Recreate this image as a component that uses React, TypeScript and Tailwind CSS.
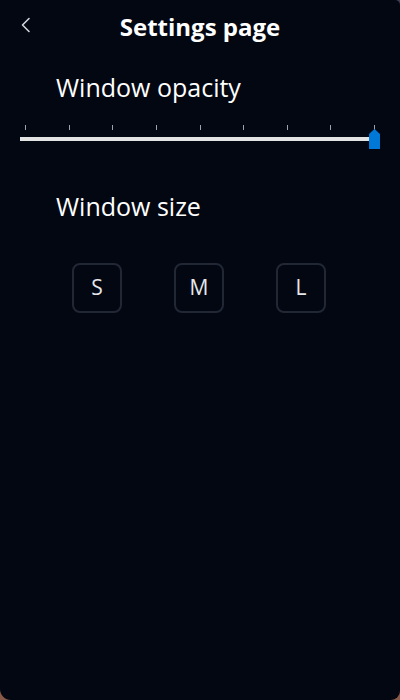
import React from "react";

export default function App() {
  const ticks = Array.from({ length: 9 });
  return (
    <div className="w-[400px] h-[700px] bg-gradient-to-b from-[#3a4152] via-[#2a2730] to-[#8a5a48]">
      <div
        className="w-[400px] h-[700px] bg-[#030712] rounded-tr-[5px] rounded-br-[9px] rounded-bl-[11px] flex flex-col"
        style={{ fontFamily: '"Open Sans", "Noto Sans", sans-serif' }}
      >
        <div className="grid grid-cols-[1fr_auto_1fr] items-start pt-[11px]">
          <div className="pl-[20px] pt-[6px]">
            <svg width="12" height="16" viewBox="0 0 12 16" fill="none">
              <polyline
                points="9,1.5 2.5,8 9,14.5"
                stroke="#d1d5db"
                strokeWidth="1.6"
                strokeLinecap="round"
                strokeLinejoin="round"
              />
            </svg>
          </div>
          <h1 className="text-[24px] leading-[32px] font-bold text-white">Settings page</h1>
          <div />
        </div>

        <div className="mt-[27px] pl-[56px] text-[25px] leading-[34px] text-white">
          Window opacity
        </div>

        <div className="mt-[21px] mx-[20px] w-[360px] flex flex-col">
          <div className="flex justify-between px-[5px]">
            {ticks.map((_, i) => (
              <div key={i} className="w-px h-[5px] bg-[#9ca3af]" />
            ))}
          </div>
          <div className="flex items-center -mt-[1px] h-[20px]">
            <div className="flex-1 h-[4px] bg-[#e3e3e3]" />
            <svg width="11" height="20" viewBox="0 0 11 20" className="shrink-0">
              <polygon points="0,5 5.5,0 11,5 11,20 0,20" fill="#0078d7" />
            </svg>
          </div>
        </div>

        <div className="mt-[40px] pl-[56px] text-[25px] leading-[34px] text-white">
          Window size
        </div>

        <div className="mt-[40px] pl-[72px] flex gap-[52px]">
          {["S", "M", "L"].map((s) => (
            <button
              key={s}
              className="w-[50px] h-[50px] rounded-[8px] border-2 border-[#212735] flex items-center justify-center text-[21px] text-[#e5e7eb] bg-transparent"
            >
              {s}
            </button>
          ))}
        </div>
      </div>
    </div>
  );
}
